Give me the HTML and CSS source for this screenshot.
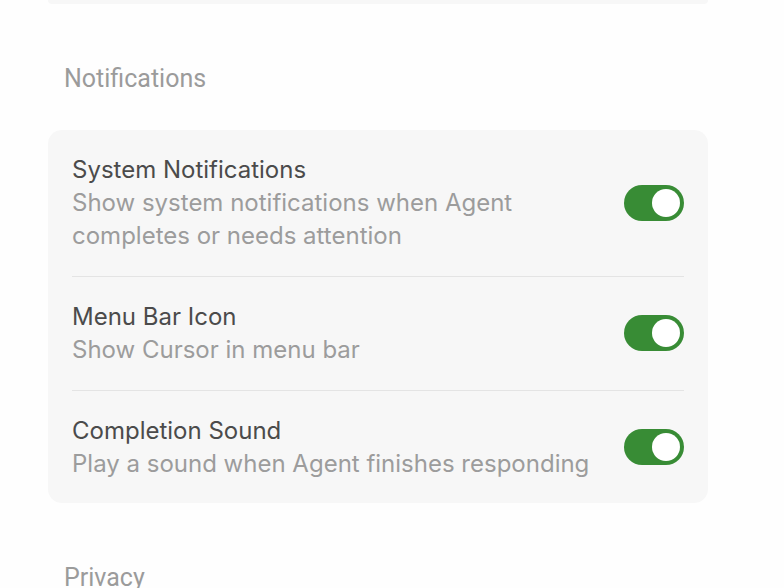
FILE: index.html
```html
<!DOCTYPE html>
<html lang="en">
<head>
  <meta charset="UTF-8">
  <meta name="viewport" content="width=device-width, initial-scale=1.0">
  <title>Settings</title>
  <link rel="stylesheet" href="styles.css">
</head>
<body>
  <div class="settings">
    <div class="card card-tail"></div>

    <h2 class="section-title">Notifications</h2>
    <div class="card">
      <div class="row">
        <div class="row-text">
          <div class="row-title">System Notifications</div>
          <div class="row-desc">Show system notifications when Agent<br>completes or needs attention</div>
        </div>
        <div class="toggle on"><span class="knob"></span></div>
      </div>
      <div class="row">
        <div class="row-text">
          <div class="row-title">Menu Bar Icon</div>
          <div class="row-desc">Show Cursor in menu bar</div>
        </div>
        <div class="toggle on"><span class="knob"></span></div>
      </div>
      <div class="row">
        <div class="row-text">
          <div class="row-title">Completion Sound</div>
          <div class="row-desc">Play a sound when Agent finishes responding</div>
        </div>
        <div class="toggle on"><span class="knob"></span></div>
      </div>
    </div>

    <h2 class="section-title">Privacy</h2>
  </div>
</body>
</html>
```

FILE: styles.css
```css
body {
  margin: 0;
  background: #fefefe;
  font-family: Inter, "Liberation Sans", Arial, sans-serif;
  overflow: hidden;
}
.settings {
  width: 660px;
  margin-left: 48px;
}
.card {
  background: #f7f7f7;
  border-radius: 14px;
  padding: 0 24px;
}
.card-tail {
  height: 4px;
  border-radius: 0 0 14px 14px;
}
.section-title {
  margin: 0;
  padding: 60px 16px 36px;
  font-family: Roboto, "Liberation Sans", sans-serif;
  font-size: 25px;
  font-weight: normal;
  line-height: 30px;
  color: #9b9b9b;
}
.row {
  display: flex;
  align-items: center;
  justify-content: space-between;
  padding: 23px 0 24px;
  border-bottom: 1px solid #e4e4e4;
}
.row:last-child {
  padding-bottom: 23px;
  border-bottom: none;
}
.row-title {
  font-size: 24px;
  line-height: 33px;
  color: #4b4b4b;
}
.row-desc {
  font-size: 24px;
  line-height: 33px;
  color: #9c9c9c;
}
.toggle {
  width: 60px;
  height: 36px;
  border-radius: 18px;
  background: #ccc;
  box-sizing: border-box;
  padding: 4px;
  display: flex;
}
.toggle.on {
  background: #388c35;
  justify-content: flex-end;
}
.knob {
  width: 28px;
  height: 28px;
  border-radius: 50%;
  background: #fff;
}
```
